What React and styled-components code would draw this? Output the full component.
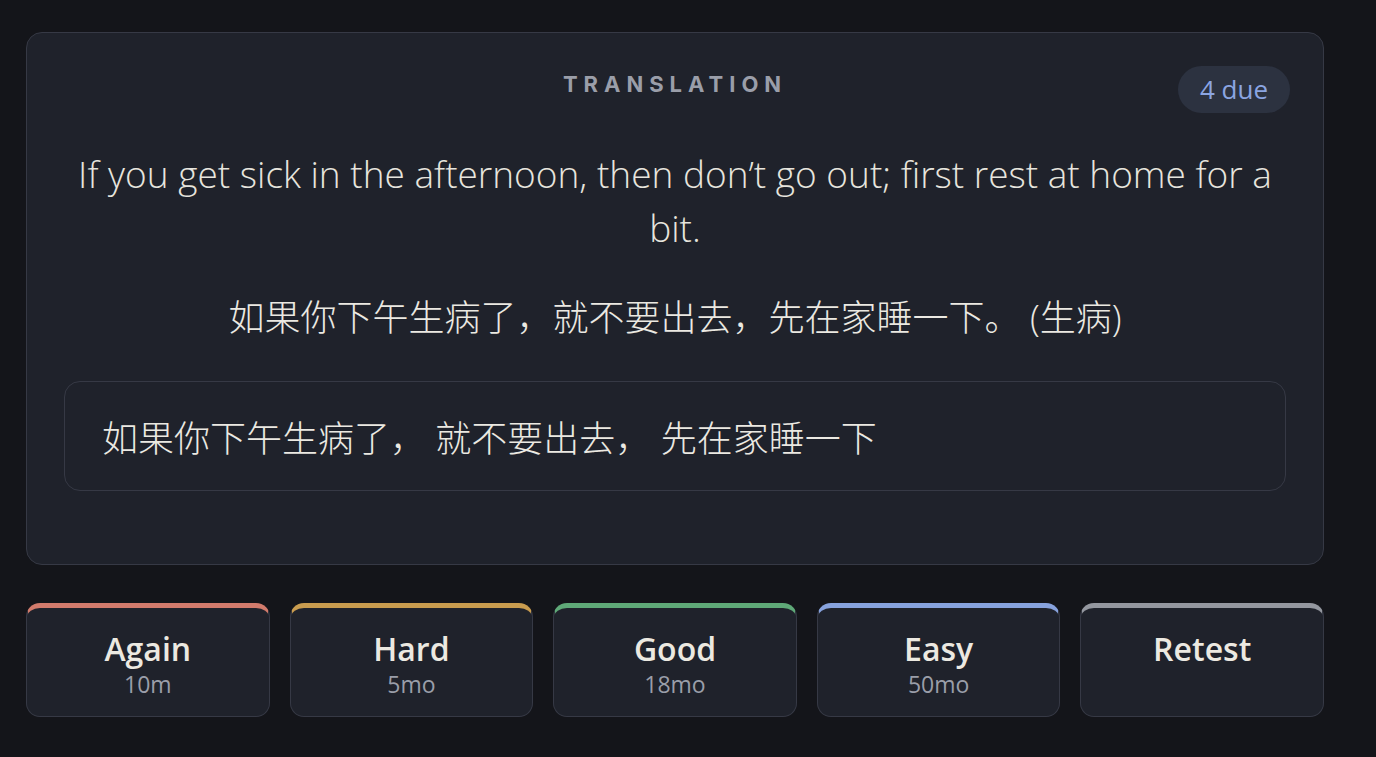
import React from 'react';
import styled, { createGlobalStyle } from 'styled-components';

const GlobalStyle = createGlobalStyle`
    html, body {
        margin: 0;
        background: #14151a;
    }
    * {
        box-sizing: border-box;
    }
`;

const Page = styled.div`
    min-height: 757px;
    padding: 32px 52px 0 26px;
    background: #14151a;
    font-family: "Open Sans", "Noto Sans CJK SC", sans-serif;
`;

const Card = styled.section`
    position: relative;
    background: #1f222b;
    border: 1px solid #363945;
    border-radius: 16px;
    padding: 33px 37px 73px;
    text-align: center;
`;

const Label = styled.div`
    font-family: Inter, "Liberation Sans", sans-serif;
    font-weight: 700;
    font-size: 22px;
    line-height: 36px;
    letter-spacing: 6px;
    color: #9a9ea9;
`;

const DueBadge = styled.span`
    position: absolute;
    top: 33px;
    right: 33px;
    height: 47px;
    padding: 0 22px;
    border-radius: 24px;
    background: #2c3240;
    color: #8ba5e2;
    font-size: 26px;
    line-height: 47px;
`;

const Sentence = styled.p`
    margin: 45px 0 0;
    font-size: 37px;
    font-weight: 300;
    line-height: 54px;
    color: #e7e5de;
`;

const Prompt = styled.p`
    margin: 39px 0 0;
    font-size: 36px;
    font-weight: 300;
    line-height: 48px;
    color: #ebe9e2;
`;

const Answer = styled.div`
    margin-top: 39px;
    height: 110px;
    display: flex;
    align-items: center;
    padding: 0 37px;
    border: 1px solid #363945;
    border-radius: 16px;
    font-size: 36px;
    font-weight: 300;
    color: #ebe9e2;
    text-align: left;
`;

const Grades = styled.div`
    display: grid;
    grid-template-columns: repeat(5, 1fr);
    gap: 20px;
    margin-top: 38px;
`;

const GradeButton = styled.button`
    height: 114px;
    display: flex;
    flex-direction: column;
    align-items: center;
    padding: 21px 0 0;
    background: #1f222b;
    border: 1px solid #363945;
    border-top: 5px solid ${(p) => p.$accent};
    border-radius: 14px;
    font-family: inherit;
    cursor: pointer;
`;

const GradeTitle = styled.span`
    font-size: 32px;
    line-height: 40px;
    font-weight: 600;
    color: #ece9e1;
`;

const GradeInterval = styled.span`
    margin-top: 0;
    font-size: 23px;
    line-height: 30px;
    color: #9a9ea9;
`;

const grades = [
    { title: 'Again', interval: '10m', accent: '#d27b6c' },
    { title: 'Hard', interval: '5mo', accent: '#c99c4f' },
    { title: 'Good', interval: '18mo', accent: '#5fa978' },
    { title: 'Easy', interval: '50mo', accent: '#87a2dd' },
    { title: 'Retest', interval: '', accent: '#94979f' },
];

export default function App() {
    return (
        <Page>
            <GlobalStyle />
            <Card>
                <Label>TRANSLATION</Label>
                <DueBadge>4 due</DueBadge>
                <Sentence>
                    If you get sick in the afternoon, then don’t go out; first rest at home for a bit.
                </Sentence>
                <Prompt>如果你下午生病了，就不要出去，先在家睡一下。 (生病)</Prompt>
                <Answer>如果你下午生病了， 就不要出去， 先在家睡一下</Answer>
            </Card>
            <Grades>
                {grades.map((g) => (
                    <GradeButton key={g.title} $accent={g.accent}>
                        <GradeTitle>{g.title}</GradeTitle>
                        {g.interval && <GradeInterval>{g.interval}</GradeInterval>}
                    </GradeButton>
                ))}
            </Grades>
        </Page>
    );
}
